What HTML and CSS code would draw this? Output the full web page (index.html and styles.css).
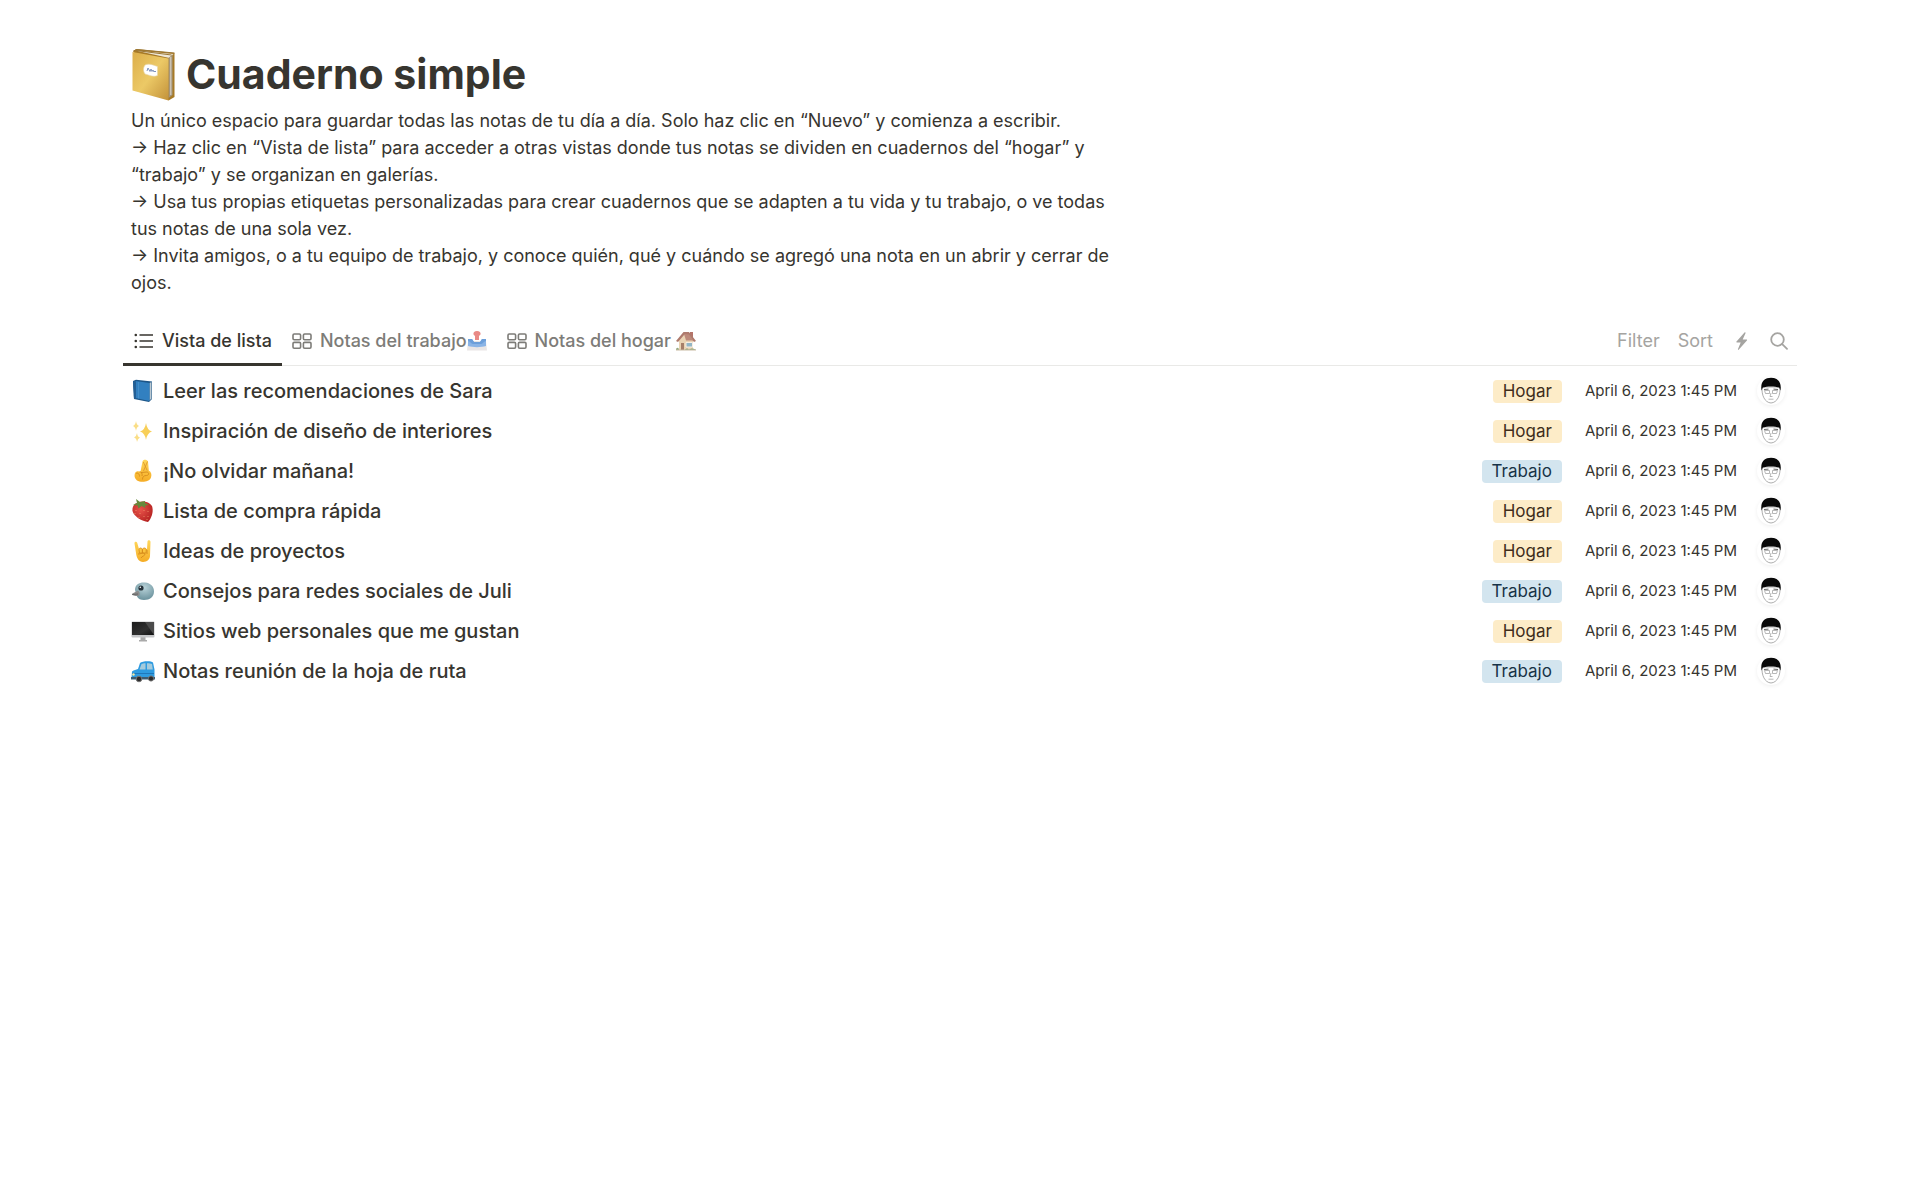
FILE: index.html
```html
<!DOCTYPE html>
<html lang="es">
<head>
<meta charset="utf-8">
<meta name="viewport" content="width=device-width, initial-scale=1">
<title>Cuaderno simple</title>
<link rel="stylesheet" href="styles.css">
</head>
<body>
<svg class="defs" aria-hidden="true">
  <defs>
    <linearGradient id="gold" x1="0" y1="0" x2="1" y2="1"><stop offset="0" stop-color="#dcae4a"/><stop offset=".5" stop-color="#ecc966"/><stop offset="1" stop-color="#c3923a"/></linearGradient>
    <linearGradient id="screen" x1="0" y1="0" x2="1" y2="1"><stop offset="0" stop-color="#1c1c1c"/><stop offset=".6" stop-color="#303030"/><stop offset="1" stop-color="#111"/></linearGradient>
    <linearGradient id="hand" x1="0" y1="0" x2="0" y2="1"><stop offset="0" stop-color="#ffd75a"/><stop offset="1" stop-color="#f5ac25"/></linearGradient>
    <radialGradient id="bird" cx=".5" cy=".3" r=".7"><stop offset="0" stop-color="#b9d3d9"/><stop offset="1" stop-color="#6b929d"/></radialGradient>
    <radialGradient id="berry" cx=".4" cy=".4" r=".7"><stop offset="0" stop-color="#e8534a"/><stop offset="1" stop-color="#b3201f"/></radialGradient>
    <symbol id="gallery" viewBox="0 0 20 16">
      <g fill="none" stroke="currentColor" stroke-width="1.6"><rect x="1" y="1" width="7.6" height="5.8" rx="1.2"/><rect x="11.4" y="1" width="7.6" height="5.8" rx="1.2"/><rect x="1" y="9.4" width="7.6" height="5.8" rx="1.2"/><rect x="11.4" y="9.4" width="7.6" height="5.8" rx="1.2"/></g>
    </symbol>
    <symbol id="face" viewBox="0 0 28 28">
      <path d="M5 10C4.500 18 7.500 25.500 14 26c6.500-.5 9.500-8 9-16z" fill="#fff" stroke="#999" stroke-width=".8"/>
      <path d="M4.600 13.500C3 5 7.500.8 14 .8S25 5 23.400 13.500l-1.200-3C18 9 10 9 5.800 10.500z" fill="#080808"/>
      <path d="M7 12.500l4.500-.4M16.500 12.100l4.500.4" stroke="#555" stroke-width=".9"/>
      <path d="M7.500 13.500h5v3H8.500zM15.500 13.500h5l-1 3h-4zM14 16l-1 3.500h2.500M11.500 22.200h5" fill="none" stroke="#999" stroke-width=".7"/>
    </symbol>
  </defs>
</svg>
<main class="page">
  <header class="intro">
    <h1 class="title">
      <svg class="title-icon" viewBox="0 0 44 54" aria-hidden="true">
        <path d="M1.500 3L5 1l38 4v44l-6 3.500z" fill="#a77a27"/>
        <path d="M4 2.500L42 6l-4 4z" fill="#eee8d9"/>
        <path d="M37 10l4-3.500V47l-4 3z" fill="#a3957c"/>
        <path d="M39.300 9v38" stroke="#ddd6c9" stroke-width="1"/>
        <path d="M4.500 2.500L40 7M2 3l3-1.500L43 5" fill="none" stroke="#9b7735" stroke-width="1"/>
        <path d="M1 4l36 6.500v42L1 42.500z" fill="url(#gold)"/>
        <path d="M13.500 17c4-2 8 0 12.500 1.500v9c-4 2-8-.5-12.500-1.500-2-3-2-6 0-9z" fill="#fff" stroke="#e6d5a9" stroke-width=".6"/>
        <path d="M15.500 23l1-3 2 3.500 1-2.500 1 2.500 1-1.500 1 2 1-1 1 1" fill="none" stroke="#7388b5" stroke-width=".9"/>
      </svg>
      Cuaderno simple
    </h1>
    <p class="description">Un único espacio para guardar todas las notas de tu día a día. Solo haz clic en “Nuevo” y comienza a escribir.<br>→ Haz clic en “Vista de lista” para acceder a otras vistas donde tus notas se dividen en cuadernos del “hogar” y “trabajo” y se organizan en galerías.<br>→ Usa tus propias etiquetas personalizadas para crear cuadernos que se adapten a tu vida y tu trabajo, o ve todas tus notas de una sola vez.<br>→ Invita amigos, o a tu equipo de trabajo, y conoce quién, qué y cuándo se agregó una nota en un abrir y cerrar de ojos.</p>
  </header>

  <div class="toolbar">
    <nav class="tabs" aria-label="Vistas">
      <button class="tab tab-active" type="button">
        <svg class="list-icon" viewBox="0 0 20 16" aria-hidden="true"><path d="M5.500 2H19M5.500 8H19M5.500 14H19" stroke="currentColor" stroke-width="1.700"/><g fill="currentColor"><circle cx="1.800" cy="2" r="1.300"/><circle cx="1.800" cy="8" r="1.300"/><circle cx="1.800" cy="14" r="1.300"/></g></svg>
        <span>Vista de lista</span>
      </button>
      <button class="tab" type="button">
        <svg class="gallery-icon" aria-hidden="true"><use href="#gallery"/></svg>
        <span class="tab-label">Notas del trabajo<svg class="tab-emoji" viewBox="0 0 20 20" aria-hidden="true"><path d="M1 10h18l1 9.500H0z" fill="#e9e6e6"/><path d="M1 8h4l2 3h6l2-3h4v7c-5 1.500-13 1.500-18 0z" fill="#8ab4e6"/><path d="M1 8h4l2 3h6l2-3h4v2c-2 0-3 3-5 3H6c-2 0-3-3-5-3z" fill="#6c9fda"/><path d="M10 0c2.500 0 4 1.500 3.500 3.500L12 5v4H8V5L6.500 3.500C6 1.500 7.500 0 10 0z" fill="#e98a86"/></svg></span>
      </button>
      <button class="tab" type="button">
        <svg class="gallery-icon" aria-hidden="true"><use href="#gallery"/></svg>
        <span class="tab-label tab-label-spaced">Notas del hogar<svg class="tab-emoji" viewBox="0 0 20 20" aria-hidden="true"><path d="M14 1h3v6h-3z" fill="#b5746a"/><path d="M3 8l5-6 9 6v11H3z" fill="#ead4b4"/><path d="M0 10L7.500 1H13l7 9-2 1-5.500-6.500L8 4l-6 7z" fill="#ae7a6d"/><path d="M8 3l5 .5 4.500 6H10z" fill="#bd8a7b"/><path d="M5 12h3v7H5z" fill="#a67f69"/><path d="M10 11.500h6.500V16H10z" fill="#93b6c5" stroke="#f8eee2"/><path d="M0 19c0-3 3-3 3 0zM9 19c1-2 3-2 4 0 1-2 5-2 7 0z" fill="#92a97e"/><path d="M0 19h20" stroke="#c9bba4" stroke-width="1"/></svg></span>
      </button>
    </nav>
    <div class="tools">
      <button class="tool" type="button">Filter</button>
      <button class="tool" type="button">Sort</button>
      <button class="tool" type="button" aria-label="Automations"><svg class="bolt-icon" viewBox="0 0 12 18" aria-hidden="true"><path d="M9 .5L1 9.600c-.4.500-.2.900.4.900h3.800L2.500 17c-.3.800.4 1.200.9.600l8-9.200c.4-.5.200-.9-.4-.9H7.200L10 1.200C10.300.3 9.600-.1 9 .5z" fill="currentColor"/></svg></button>
      <button class="tool" type="button" aria-label="Search"><svg class="search-icon" viewBox="0 0 18 18" aria-hidden="true"><g fill="none" stroke="currentColor" stroke-width="1.800" stroke-linecap="round"><circle cx="7.500" cy="7.500" r="6.300"/><path d="M12.200 12.200l4.800 4.600"/></g></svg></button>
    </div>
  </div>

  <ul class="notes">
    <li class="note">
      <svg class="note-icon" viewBox="0 0 24 24" aria-hidden="true"><path d="M2 2l3-1.200 16 1.700v17.500L18 23 3 20z" fill="#1d5688"/><path d="M18.500 4l2-1v16.500l-2 2z" fill="#bcc9d2"/><path d="M4.500 2L18.500 4v18L4.500 19z" fill="#3280c0"/><path d="M2 2l3 .5v17L3 20z" fill="#235f95"/><path d="M7.500 3v16.500" stroke="#4a93cd" stroke-width=".7"/></svg>
      <a class="note-title" href="#">Leer las recomendaciones de Sara</a>
      <span class="tag tag-home">Hogar</span><time class="date">April 6, 2023 1:45 PM</time><svg class="avatar" role="img" aria-label="Autor"><use href="#face"/></svg>
    </li>
    <li class="note">
      <svg class="note-icon" viewBox="0 0 24 24" aria-hidden="true"><path d="M15 4q1 7 6 8.500-5 1.500-6 8.500-1-7-6-8.500 5-1.500 6-8.500z" fill="#f8cf58"/><path d="M5 2q.5 4 3 5-2.500 1-3 5-.5-4-3-5 2.500-1 3-5zM6 14q.5 4 3 4.500-2.500 1-3 4.500-.5-4-3-4.500 2.500-1 3-4.500z" fill="#fade86"/></svg>
      <a class="note-title" href="#">Inspiración de diseño de interiores</a>
      <span class="tag tag-home">Hogar</span><time class="date">April 6, 2023 1:45 PM</time><svg class="avatar" role="img" aria-label="Autor"><use href="#face"/></svg>
    </li>
    <li class="note">
      <svg class="note-icon" viewBox="0 0 24 24" aria-hidden="true"><path d="M9.500 12.500L11.500 2.500C12 0 16 0 17 2.500l.8 9c2.500 1.500 3.200 4 2.200 7-1.500 4.500-10 5.500-14 3-2.500-2-3-5-2-7.500 1-1.500 2.500-2 4-1.500z" fill="url(#hand)"/><path d="M16.500 2.500L12.500 12M12.300 3l3.900 8.500" fill="none" stroke="#d9932a" stroke-width=".8"/><path d="M5 14.500c1.500-1 3.500 0 3.500 3M8.500 13c2-.5 3 1.500 2.500 4M10 13.500l6-.5c2.500.5 2 3.500-.5 3.500-3 0-4 1.500-4 4" fill="none" stroke="#d58a1b" stroke-width=".9"/></svg>
      <a class="note-title" href="#">¡No olvidar mañana!</a>
      <span class="tag tag-work">Trabajo</span><time class="date">April 6, 2023 1:45 PM</time><svg class="avatar" role="img" aria-label="Autor"><use href="#face"/></svg>
    </li>
    <li class="note">
      <svg class="note-icon" viewBox="0 0 24 24" aria-hidden="true"><path d="M3 6C7 1.500 17 1 21 7c2 6-1 13-4 16C11 22 3 18 1.500 12c-.3-2 .3-4.500 1.500-6z" fill="url(#berry)"/><path d="M2 6l4-2-1-4 4 3 5-1v2l4 2-4 .5.500 2.500-4-2-3 2.500-1-3z" fill="#66893b"/><path d="M5 11v.8M9 14v.8M13 11v.8M17 12v.8M8 18v.8M13 17v.8M17 17v.8M16 20v.8M4 14v.8" stroke="#f4aa75" stroke-width=".9"/></svg>
      <a class="note-title" href="#">Lista de compra rápida</a>
      <span class="tag tag-home">Hogar</span><time class="date">April 6, 2023 1:45 PM</time><svg class="avatar" role="img" aria-label="Autor"><use href="#face"/></svg>
    </li>
    <li class="note">
      <svg class="note-icon" viewBox="0 0 24 24" aria-hidden="true"><path d="M5 14L3.500 4.500c-.4-2 2.200-2.500 2.700-.8L8 10h8l.5-7.500c.2-2 3-1.700 3 .3L19 17c0 3-3 6-7 6s-6.500-4-7-9z" fill="url(#hand)"/><path d="M8 10.500c0-2 3-2 3.300 0v3.500H8.500zM11.500 10.500c.3-2 3.500-2 3.700 0L15 14h-3.500z" fill="#fbc43e" stroke="#d58a1b" stroke-width=".8"/><path d="M7 15c3 0 6-2 7 0 0 2-3 2-4 4M16 11v4" fill="none" stroke="#d58a1b" stroke-width=".9"/></svg>
      <a class="note-title" href="#">Ideas de proyectos</a>
      <span class="tag tag-home">Hogar</span><time class="date">April 6, 2023 1:45 PM</time><svg class="avatar" role="img" aria-label="Autor"><use href="#face"/></svg>
    </li>
    <li class="note">
      <svg class="note-icon" viewBox="0 0 24 24" aria-hidden="true"><path d="M4 11C4 5 9 3 14 3.500c6 .5 9 4.500 9 9 0 5-4 8.500-10 8.500-3 0-6-1-7-3.500z" fill="url(#bird)"/><path d="M7 11.500L1.500 14.500c-1.500 1.500 2 3 5.500 2.500 2-.5 2.500-3 0-5.500z" fill="#8c8c8c"/><path d="M1 15.500l6-.5" stroke="#555" stroke-width=".7"/><circle cx="10" cy="9" r="2.600" fill="#26333a"/><circle cx="9.300" cy="8.200" r=".8" fill="#fff"/></svg>
      <a class="note-title" href="#">Consejos para redes sociales de Juli</a>
      <span class="tag tag-work">Trabajo</span><time class="date">April 6, 2023 1:45 PM</time><svg class="avatar" role="img" aria-label="Autor"><use href="#face"/></svg>
    </li>
    <li class="note">
      <svg class="note-icon" viewBox="0 0 24 24" aria-hidden="true"><path d="M9.500 18h5v3h1.500v1.500H8V21h1.500z" fill="#aaa"/><rect x=".5" y="2.500" width="23" height="16" rx="1" fill="#c5c6c8"/><path d="M1 3h22v13H1z" fill="url(#screen)"/><path d="M14 3h9v13z" fill="#4b4b4b"/></svg>
      <a class="note-title" href="#">Sitios web personales que me gustan</a>
      <span class="tag tag-home">Hogar</span><time class="date">April 6, 2023 1:45 PM</time><svg class="avatar" role="img" aria-label="Autor"><use href="#face"/></svg>
    </li>
    <li class="note">
      <svg class="note-icon" viewBox="0 0 24 24" aria-hidden="true"><path d="M1 12.500C3 11 5 10.500 7 10l2-6C11 2 20 1.500 22 3.500l1.500 7V19H.5z" fill="#2e9be0"/><path d="M8.500 10.500L10.500 5c1-.6 2.500-.8 4-.8v6.300zM16 4.200c2 0 4 .2 5 .8l.8 5.500H16z" fill="#a5cbdc"/><path d="M1 14.500h22" stroke="#1c6fb0" stroke-width=".8"/><path d="M0 18h24v2.500H0z" fill="#3d5c72"/><g fill="#2b2b2b" stroke="#777" stroke-width="1"><circle cx="8" cy="20" r="2.800"/><circle cx="20" cy="19.500" r="2.600"/></g><circle cx="2.500" cy="15.500" r="1.200" fill="#f6e9a3"/></svg>
      <a class="note-title" href="#">Notas reunión de la hoja de ruta</a>
      <span class="tag tag-work">Trabajo</span><time class="date">April 6, 2023 1:45 PM</time><svg class="avatar" role="img" aria-label="Autor"><use href="#face"/></svg>
    </li>
  </ul>
</main>
</body>
</html>
```

FILE: styles.css
```css
* {
  box-sizing: border-box;
}

body {
  margin: 0;
  background: #fff;
  color: #37352f;
  font-family: Inter, "Liberation Sans", sans-serif;
  font-size: 18px;
}

button {
  border: 0;
  padding: 0;
  background: none;
  color: inherit;
  font: inherit;
  cursor: pointer;
}

svg {
  display: block;
  flex: none;
}

.defs {
  position: absolute;
  width: 0;
  height: 0;
}

.page {
  padding: 46px 123px;
}

.intro {
  padding: 0 8px;
}

.title {
  display: flex;
  align-items: flex-end;
  gap: 10px;
  margin: 0;
  font-size: 41px;
  line-height: 56px;
  font-weight: 700;
}

.title-icon {
  width: 45px;
  height: 54px;
}

.description {
  max-width: 984px;
  margin: 5px 0 0;
  line-height: 27px;
}

.toolbar {
  display: flex;
  justify-content: space-between;
  align-items: stretch;
  height: 48px;
  margin-top: 22px;
  border-bottom: 1px solid #e9e9e7;
}

.tabs {
  display: flex;
  gap: 10px;
}

.tab {
  display: flex;
  align-items: center;
  gap: 8px;
  margin-bottom: -1px;
  padding: 0;
  border-bottom: 3px solid transparent;
  color: #7d7c78;
  font-weight: 500;
}

.tab-active {
  padding: 0 10px 0 11px;
  border-color: #37352f;
  color: #37352f;
}

.list-icon,
.gallery-icon {
  width: 20px;
  height: 16px;
}

.tab-label {
  display: flex;
  align-items: center;
  padding-right: 10px;
}

.tab-label-spaced {
  gap: 5px;
}

.tab-emoji {
  width: 20px;
  height: 20px;
}

.tools {
  display: flex;
  align-items: center;
  gap: 18px;
  padding: 0 9px 2px 0;
  color: #a5a4a1;
}

.bolt-icon {
  width: 21px;
  height: 18px;
}

.search-icon {
  width: 18px;
  height: 18px;
}

.notes {
  margin: 5px 0 0;
  padding: 0 12px 0 8px;
  list-style: none;
}

.note {
  display: flex;
  align-items: center;
  height: 40px;
}

.note-icon {
  width: 24px;
  height: 24px;
}

.note-title {
  margin: 0 auto 0 8px;
  color: inherit;
  font-size: 20px;
  font-weight: 500;
  text-decoration: none;
}

.tag {
  padding: 0 10px;
  border-radius: 4px;
  font-size: 17px;
  line-height: 23px;
}

.tag-home {
  background: #fdecc8;
  color: #402c1b;
}

.tag-work {
  background: #d3e5ef;
  color: #183347;
}

.date {
  margin: 0 20px 0 23px;
  padding-bottom: 1px;
  font-size: 15px;
  line-height: 22px;
}

.avatar {
  width: 28px;
  height: 28px;
  border-radius: 50%;
  box-shadow: 0 1px 4px #0001;
}
```
